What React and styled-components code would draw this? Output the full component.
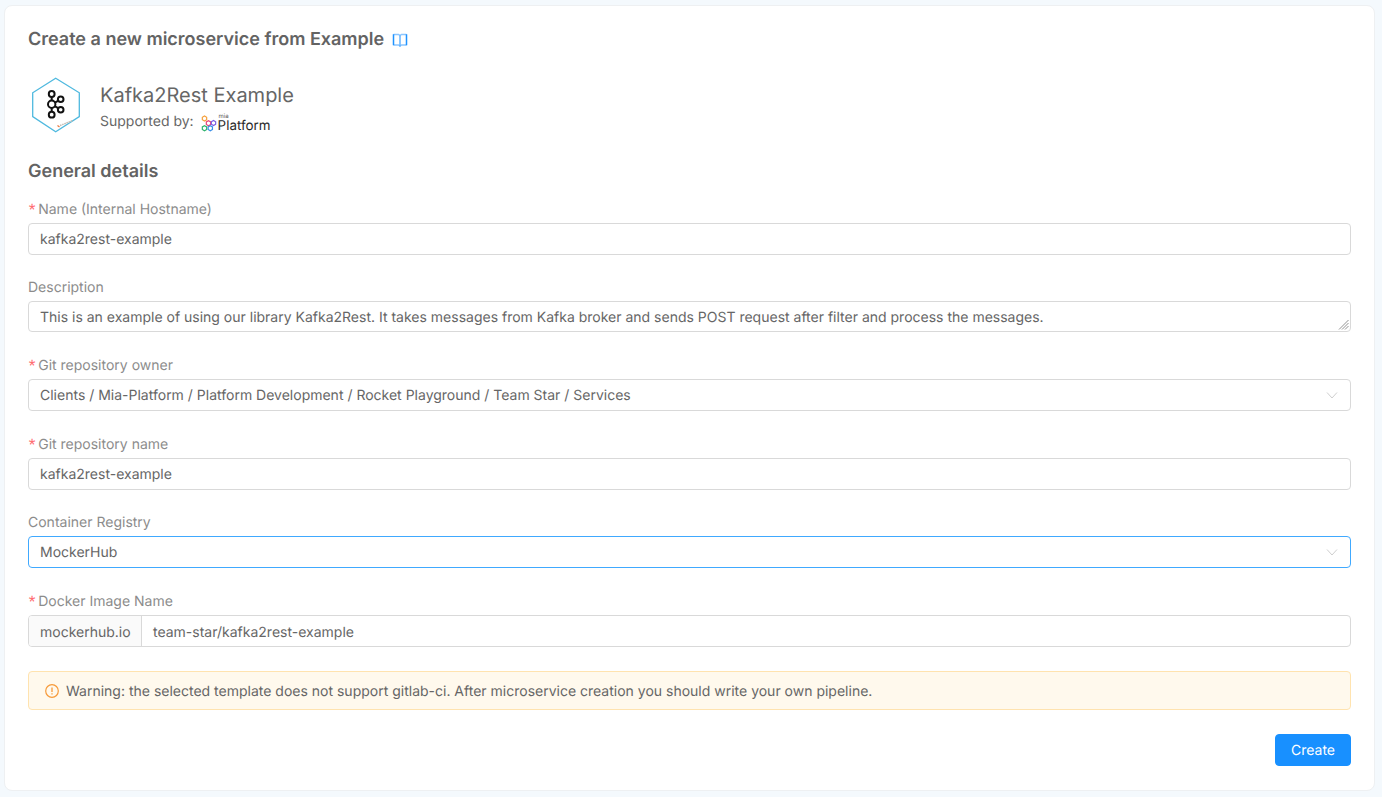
import React from "react";
import styled, { createGlobalStyle } from "styled-components";

const Global = createGlobalStyle`
  html, body { margin: 0; padding: 0; background: #f4f9fd; }
  * { box-sizing: border-box; }
  body {
    font-family: Inter, "Liberation Sans", sans-serif;
    font-size: 14px;
    color: #666;
    text-rendering: geometricPrecision;
  }
`;

const Page = styled.div`
  width: 1382px;
  height: 797px;
  padding: 5px 7px 6px 4px;
  overflow: hidden;
`;
const Card = styled.main`
  height: 786px;
  background: #fff;
  border: 1px solid #eef0f2;
  border-radius: 8px;
  padding: 19px 23px 0;
  display: flex;
  flex-direction: column;
`;
const TitleRow = styled.div`
  display: flex;
  align-items: center;
  gap: 8px;
  height: 30px;
`;
const Title = styled.h1`
  margin: 0;
  font-size: 18px;
  line-height: 30px;
  font-weight: 600;
  color: #636363;
`;
const Brand = styled.div`
  display: flex;
  align-items: center;
  gap: 16px;
  margin-top: 22px;
  height: 56px;
`;
const BrandText = styled.div`
  display: flex;
  flex-direction: column;
  padding-top: 4px;
`;
const BrandName = styled.div`
  font-size: 20px;
  line-height: 30px;
  color: #666;
`;
const Supported = styled.div`
  display: flex;
  align-items: center;
  gap: 6px;
  line-height: 22px;
  height: 24px;
  color: #666;
`;
const Section = styled.h2`
  margin: 24px 0 0;
  font-size: 18px;
  line-height: 30px;
  font-weight: 600;
  color: #636363;
`;
const Item = styled.div`
  margin-top: ${(p) => p.$top ?? 22}px;
`;
const Label = styled.label`
  display: block;
  height: 22px;
  line-height: 22px;
  margin-bottom: 2px;
  color: #8c8c8c;
`;
const Star = styled.span`
  color: #ff6b70;
  margin-left: -1px;
  margin-right: 1px;
  font-family: "Liberation Mono", monospace;
  font-size: 17px;
  line-height: 1;
  vertical-align: -2px;
`;
const Field = styled.div`
  position: relative;
  display: flex;
  align-items: center;
  height: ${(p) => p.$h ?? 32}px;
  padding: 2px 11px 0;
  border: 1px solid ${(p) => (p.$focus ? "#40a9ff" : "#d9d9d9")};
  border-radius: 4px;
  background: #fff;
  color: #666;
  line-height: 22px;
`;
const Chevron = styled.svg`
  position: absolute;
  right: 12px;
  top: 50%;
  margin-top: -6px;
`;
const Grip = styled.svg`
  position: absolute;
  right: 1px;
  bottom: 1px;
`;
const Group = styled.div`
  display: flex;
  height: 32px;
  border: 1px solid #d9d9d9;
  border-radius: 4px;
  overflow: hidden;
`;
const Addon = styled.div`
  display: flex;
  align-items: center;
  width: 113px;
  padding: 2px 0 0 11px;
  background: #fafafa;
  border-right: 1px solid #d9d9d9;
  color: #666;
`;
const GroupValue = styled.div`
  display: flex;
  align-items: center;
  padding: 2px 11px 0;
  color: #666;
`;
const Alert = styled.div`
  display: flex;
  align-items: center;
  gap: 7px;
  height: 39px;
  margin-top: 24px;
  padding: 0 16px;
  background: #fff9ed;
  border: 1px solid #ffe3af;
  border-radius: 4px;
  color: #666;
`;
const AlertText = styled.span`
  padding-top: 2px;
`;
const Actions = styled.div`
  display: flex;
  justify-content: flex-end;
  margin-top: 24px;
`;
const Button = styled.button`
  width: 76px;
  height: 32px;
  border: 1px solid #1890ff;
  border-radius: 4px;
  background: #1890ff;
  color: #fff;
  font: inherit;
  text-rendering: geometricPrecision;
`;

const Down = () => (
  <Chevron width="12" height="12" viewBox="0 0 12 12" fill="none" stroke="#cfcfcf" strokeWidth="1">
    <path d="M1 3.5 L6 9 L11 3.5" />
  </Chevron>
);

const BookIcon = () => (
  <svg width="16" height="16" viewBox="0 0 16 16" fill="none">
    <path d="M1.5 2.5 H6.5 L8 3.5 L9.5 2.5 H14.5 M1.5 13 H6.5 L8 14 L9.5 13 H14.5" stroke="#8cc6ff" strokeWidth="1.5" />
    <path d="M1.5 2.2 V13.2 M14.5 2.2 V13.2" stroke="#1f93ff" strokeWidth="1.5" />
    <path d="M8 3.5 V14.5" stroke="#5aafff" strokeWidth="1.4" />
  </svg>
);

const KafkaLogo = () => (
  <svg width="56" height="56" viewBox="0 0 56 56" fill="none">
    <path d="M27.7 1.3 L51.3 15.8 V39.6 L27.7 54.7 L4.7 39.6 V15.8 Z" stroke="#4fb9df" strokeWidth="1.3" fill="#fff" />
    <g stroke="#111" strokeWidth="2" fill="#fff">
      <path d="M23.7 17 V37.7 M23.7 27.3 L32.7 22.3 M23.7 27.3 L32.7 32.7" />
      <circle cx="23.7" cy="17" r="2.9" />
      <circle cx="23.7" cy="27.3" r="3.7" />
      <circle cx="23.7" cy="37.7" r="2.9" />
      <circle cx="32.7" cy="22.3" r="2.8" />
      <circle cx="32.7" cy="32.7" r="2.8" />
    </g>
    <path d="M32 48.5 L45 43.5" stroke="#c4bdb4" strokeWidth="1.5" strokeDasharray="1.6 .7" />
    <path d="M29.5 48.5 L31.5 50" stroke="#e8763a" strokeWidth="1.2" />
  </svg>
);

const Hex = ({ x, y, c, r = 2.5 }) => {
  const pts = [0, 1, 2, 3, 4, 5]
    .map((i) => {
      const a = (Math.PI / 3) * i + Math.PI / 6;
      return `${x + r * Math.cos(a)},${y + r * Math.sin(a)}`;
    })
    .join(" ");
  return <polygon points={pts} stroke={c} strokeWidth="1.2" fill="none" />;
};

const MiaMark = () => (
  <svg width="16" height="18" viewBox="0 0 16 18">
    <Hex x={3.5} y={3.5} c="#f5a03c" />
    <Hex x={7.5} y={8.2} c="#e8447a" />
    <Hex x={12.5} y={8} c="#7b5be0" />
    <Hex x={3.5} y={13.2} c="#2fb36d" />
    <Hex x={9.3} y={13.2} c="#3a8fe8" />
  </svg>
);

const MiaLogo = styled.span`
  display: inline-flex;
  align-items: center;
  gap: 1px;
  margin-top: 3px;
  margin-left: 1px;
`;
const MiaWords = styled.span`
  display: flex;
  flex-direction: column;
  color: #2b2b2b;
`;
const MiaSmall = styled.span`
  font-size: 6px;
  line-height: 6px;
  height: 6px;
  padding-left: 1px;
  color: #555;
`;
const MiaBig = styled.span`
  font-size: 13.4px;
  line-height: 13px;
`;

const WarnIcon = () => (
  <svg width="14" height="14" viewBox="0 0 14 14" fill="none" stroke="#f79a3a" strokeWidth="1.2">
    <circle cx="7" cy="7" r="6.3" />
    <path d="M7 3.5 V8" strokeWidth="1.3" />
    <path d="M7 9.3 V10.5" strokeWidth="1.3" />
  </svg>
);

const ResizeGrip = () => (
  <Grip width="11" height="11" viewBox="0 0 11 11" stroke="#777" strokeWidth="0.8">
    <path d="M1 10.5 L10.5 1 M4 10.5 L10.5 4 M7 10.5 L10.5 7" />
  </Grip>
);

export default function App() {
  return (
    <>
      <Global />
      <Page>
        <Card>
          <TitleRow>
            <Title>Create a new microservice from Example</Title>
            <BookIcon />
          </TitleRow>
          <Brand>
            <KafkaLogo />
            <BrandText>
              <BrandName>Kafka2Rest Example</BrandName>
              <Supported>
                Supported by:
                <MiaLogo>
                  <MiaMark />
                  <MiaWords>
                    <MiaSmall>mia</MiaSmall>
                    <MiaBig>Platform</MiaBig>
                  </MiaWords>
                </MiaLogo>
              </Supported>
            </BrandText>
          </Brand>
          <Section>General details</Section>

          <Item $top={12}>
            <Label><Star>*</Star>Name (Internal Hostname)</Label>
            <Field>kafka2rest-example</Field>
          </Item>
          <Item>
            <Label>Description</Label>
            <Field $h={31}>
              This is an example of using our library Kafka2Rest. It takes messages from Kafka broker and sends POST request after filter and process the messages.
              <ResizeGrip />
            </Field>
          </Item>
          <Item $top={23}>
            <Label><Star>*</Star>Git repository owner</Label>
            <Field>
              Clients / Mia-Platform / Platform Development / Rocket Playground / Team Star / Services
              <Down />
            </Field>
          </Item>
          <Item $top={23}>
            <Label><Star>*</Star>Git repository name</Label>
            <Field>kafka2rest-example</Field>
          </Item>
          <Item>
            <Label>Container Registry</Label>
            <Field $focus>
              MockerHub
              <Down />
            </Field>
          </Item>
          <Item $top={23}>
            <Label><Star>*</Star>Docker Image Name</Label>
            <Group>
              <Addon>mockerhub.io</Addon>
              <GroupValue>team-star/kafka2rest-example</GroupValue>
            </Group>
          </Item>
          <Alert>
            <WarnIcon />
            <AlertText>Warning: the selected template does not support gitlab-ci. After microservice creation you should write your own pipeline.</AlertText>
          </Alert>
          <Actions>
            <Button>Create</Button>
          </Actions>
        </Card>
      </Page>
    </>
  );
}
